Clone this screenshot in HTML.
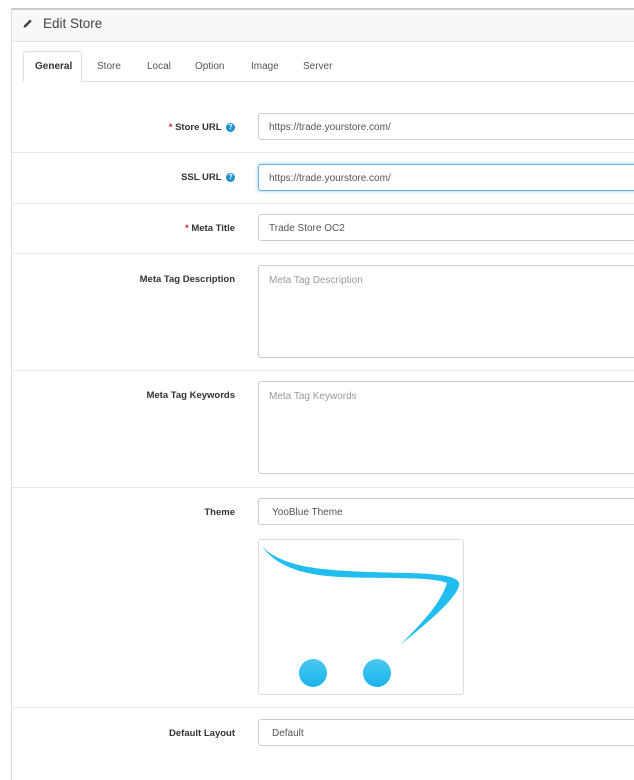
<!DOCTYPE html>
<html><head><style>
body{margin:0;width:634px;height:763px;overflow:hidden;background:#fff;font-family:"Liberation Sans",sans-serif;font-size:10px;color:#555;position:relative}
.abs{position:absolute}
.hd{left:11px;top:8px;width:640px;height:31px;background:#f8f8f8;border-top:2px solid #ccc;border-left:1px solid #ddd;border-bottom:1px solid #e5e5e5}
.panel{left:11px;top:40px;width:640px;height:740px;border-left:1px solid #ddd}
.hl{left:11px;width:640px;height:1px;background:#e8e8e8}
.lbl{right:399px;font-weight:bold;color:#333;font-size:9.5px;text-align:right;white-space:nowrap}
.req{color:#c9302c}
.q{display:inline-block;width:9px;height:9px;border-radius:50%;background:#1e91cf;color:#fff;font-size:7px;line-height:9px;text-align:center;vertical-align:middle;margin-left:2px}
.inp{left:258px;width:400px;border:1px solid #ccc;border-radius:3px;box-sizing:border-box;padding:0 10px;font-size:10px;color:#555;background:#fff}
.ph{color:#999}
.tab{top:61px;font-size:10px;color:#555}
</style></head><body>
<div class="abs hd"></div>
<svg class="abs" style="left:22px;top:17px" width="12" height="12" viewBox="0 0 12 12"><path d="M2 8.5 L8 2.5 L9.8 4.3 L3.8 10.3 L1.5 10.8 Z" fill="#444"/></svg>
<div class="abs" style="left:43px;top:16px;font-size:13.5px;color:#444">Edit Store</div>
<div class="abs panel"></div>
<div class="abs" style="left:23px;top:81px;width:620px;height:1px;background:#ddd"></div>
<div class="abs" style="left:23px;top:51px;width:59px;height:31px;border:1px solid #ddd;border-bottom:1px solid #fff;border-radius:3px 3px 0 0;background:#fff;box-sizing:border-box"></div>
<div class="abs tab" style="left:35px;font-weight:bold;color:#333">General</div>
<div class="abs tab" style="left:97px">Store</div>
<div class="abs tab" style="left:147px">Local</div>
<div class="abs tab" style="left:195px">Option</div>
<div class="abs tab" style="left:251px">Image</div>
<div class="abs tab" style="left:303px">Server</div>

<div class="abs lbl" style="top:122px"><span class="req">*</span> Store URL <span class="q">?</span></div>
<div class="abs inp" style="top:113px;height:27px;line-height:27px">https://trade.yourstore.com/</div>
<div class="abs hl" style="top:152px"></div>
<div class="abs lbl" style="top:172px">SSL URL <span class="q">?</span></div>
<div class="abs inp" style="top:164px;height:27px;line-height:27px;border-color:#66afe9;box-shadow:0 0 4px rgba(102,175,233,.6)">https://trade.yourstore.com/</div>
<div class="abs hl" style="top:203px"></div>
<div class="abs lbl" style="top:223px"><span class="req">*</span> Meta Title</div>
<div class="abs inp" style="top:214px;height:27px;line-height:27px">Trade Store OC2</div>
<div class="abs hl" style="top:253px"></div>
<div class="abs lbl" style="top:274px">Meta Tag Description</div>
<div class="abs inp ph" style="top:265px;height:93px;padding-top:9px">Meta Tag Description</div>
<div class="abs hl" style="top:370px"></div>
<div class="abs lbl" style="top:390px">Meta Tag Keywords</div>
<div class="abs inp ph" style="top:381px;height:93px;padding-top:9px">Meta Tag Keywords</div>
<div class="abs hl" style="top:487px"></div>
<div class="abs lbl" style="top:507px">Theme</div>
<div class="abs inp" style="top:498px;height:27px;line-height:27px;padding-left:13px">YooBlue Theme</div>
<div class="abs" style="left:258px;top:539px;width:206px;height:156px;border:1px solid #ddd;border-radius:3px;box-sizing:border-box"></div>
<svg class="abs" style="left:0;top:0" width="634" height="763">
<defs><linearGradient id="g" x1="0" y1="0" x2="0" y2="1"><stop offset="0" stop-color="#4cc8f0"/><stop offset="1" stop-color="#17b4ec"/></linearGradient></defs>
<path d="M262 546 C275 565 300 575 340 577 C380 579 430 576 447 583 C440 605 420 625 400 645 C425 625 455 600 459 586 C462 576 440 574 410 573 C360 572 320 571 295 564 C278 559 268 553 262 546 Z" fill="#22bdef"/>
<circle cx="313" cy="673" r="14" fill="url(#g)"/>
<circle cx="377" cy="673" r="14" fill="url(#g)"/>
</svg>
<div class="abs hl" style="top:707px"></div>
<div class="abs lbl" style="top:728px">Default Layout</div>
<div class="abs inp" style="top:719px;height:27px;line-height:27px;padding-left:13px">Default</div>
</body></html>
